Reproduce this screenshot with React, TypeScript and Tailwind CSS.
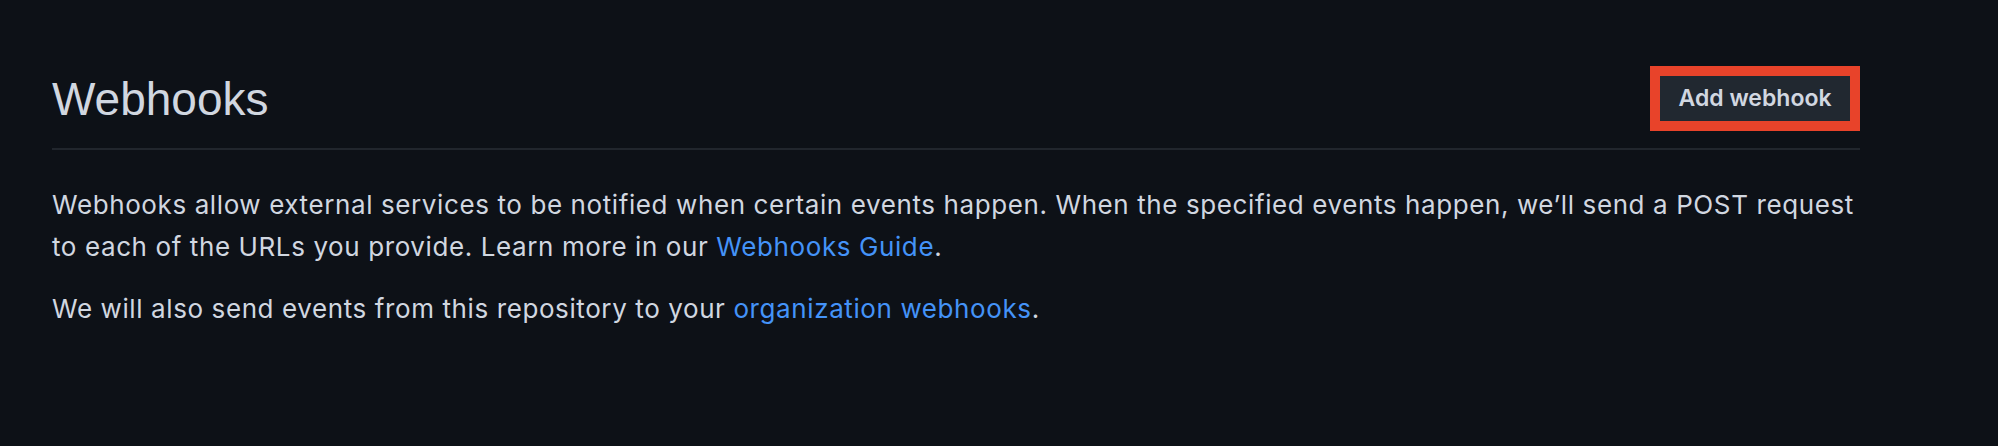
export default function App() {
  return (
    <div className="min-h-screen w-full bg-[#0d1117] text-[#d1d7e0]" style={{ height: 446 }}>
      <div className="w-[1860px] pl-[52px] font-['Inter',sans-serif]">
        <div className="flex items-center justify-between border-b-2 border-[#21262d] pt-[66px] pb-[17px]">
          <h2 className="font-['Liberation_Sans',Arial,sans-serif] text-[46px] leading-none font-normal text-[#d1d7e0]">
            Webhooks
          </h2>
          <div className="border-[10px] border-[#e8432a]">
            <button className="flex h-[45px] w-[190px] items-center justify-center bg-[#212830] text-[23px] font-semibold text-[#d1d7e0]">
              Add webhook
            </button>
          </div>
        </div>

        <p className="mt-[34px] text-[26px] leading-[42px] tracking-[0.6px]">
          Webhooks allow external services to be notified when certain events happen. When the specified events
          happen, we’ll send a POST request to each of the URLs you provide. Learn more in our{' '}
          <a className="text-[#4493f8]">Webhooks Guide</a>.
        </p>
        <p className="mt-[20px] text-[26px] leading-[42px] tracking-[0.6px]">
          We will also send events from this repository to your{' '}
          <a className="text-[#4493f8]">organization webhooks</a>.
        </p>
      </div>
    </div>
  );
}
